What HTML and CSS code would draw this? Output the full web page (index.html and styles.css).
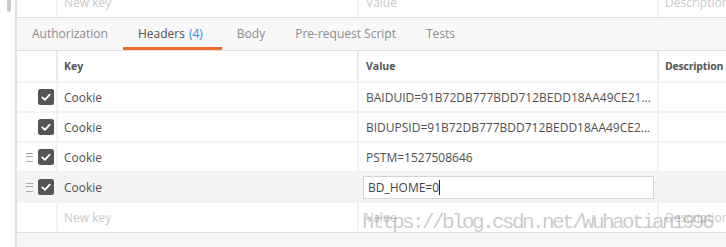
FILE: index.html
```html
<!DOCTYPE html>
<html lang="en">
<head>
    <meta charset="UTF-8">
    <title>Headers</title>
    <link rel="stylesheet" href="styles.css">
</head>
<body>
    <div class="page">
        <!-- left scroll strip -->
        <div class="gutter"><div class="thumb"></div></div>

        <div class="panel">
            <!-- previous table (params), cut at the top -->
            <div class="row prev">
                <div class="cell sel"></div>
                <div class="cell ph"><span class="clip">New key</span></div>
                <div class="cell ph"><span class="clip">Value</span></div>
                <div class="cell ph"><span class="clip">Description</span></div>
            </div>

            <div class="tabs">
                <div class="tab">Authorization</div>
                <div class="tab active">Headers <span class="count">(4)</span></div>
                <div class="tab">Body</div>
                <div class="tab">Pre-request Script</div>
                <div class="tab">Tests</div>
            </div>

            <div class="table">
                <div class="row head">
                    <div class="cell sel"></div>
                    <div class="cell">Key</div>
                    <div class="cell">Value</div>
                    <div class="cell">Description</div>
                </div>

                <div class="row">
                    <div class="cell sel">
                        <span class="handle hidden"></span>
                        <svg class="check" width="16" height="16" viewBox="0 0 16 16"><rect width="16" height="16" rx="2.5" fill="#555"/><path d="M4.3 8.4 L6.9 10.9 L11.7 5.6" fill="none" stroke="#fff" stroke-width="1.8" stroke-linecap="round" stroke-linejoin="round"/></svg>
                    </div>
                    <div class="cell">Cookie</div>
                    <div class="cell">BAIDUID=91B72DB777BDD712BEDD18AA49CE21...</div>
                    <div class="cell"></div>
                </div>

                <div class="row">
                    <div class="cell sel">
                        <span class="handle hidden"></span>
                        <svg class="check" width="16" height="16" viewBox="0 0 16 16"><rect width="16" height="16" rx="2.5" fill="#555"/><path d="M4.3 8.4 L6.9 10.9 L11.7 5.6" fill="none" stroke="#fff" stroke-width="1.8" stroke-linecap="round" stroke-linejoin="round"/></svg>
                    </div>
                    <div class="cell">Cookie</div>
                    <div class="cell">BIDUPSID=91B72DB777BDD712BEDD18AA49CE2...</div>
                    <div class="cell"></div>
                </div>

                <div class="row">
                    <div class="cell sel">
                        <span class="handle"></span>
                        <svg class="check" width="16" height="16" viewBox="0 0 16 16"><rect width="16" height="16" rx="2.5" fill="#555"/><path d="M4.3 8.4 L6.9 10.9 L11.7 5.6" fill="none" stroke="#fff" stroke-width="1.8" stroke-linecap="round" stroke-linejoin="round"/></svg>
                    </div>
                    <div class="cell">Cookie</div>
                    <div class="cell">PSTM=1527508646</div>
                    <div class="cell"></div>
                </div>

                <div class="row hover">
                    <div class="cell sel">
                        <span class="handle"></span>
                        <svg class="check" width="16" height="16" viewBox="0 0 16 16"><rect width="16" height="16" rx="2.5" fill="#555"/><path d="M4.3 8.4 L6.9 10.9 L11.7 5.6" fill="none" stroke="#fff" stroke-width="1.8" stroke-linecap="round" stroke-linejoin="round"/></svg>
                    </div>
                    <div class="cell">Cookie</div>
                    <div class="cell edit"><div class="input">BD_HOME=0<span class="caret"></span></div></div>
                    <div class="cell"></div>
                </div>

                <div class="row">
                    <div class="cell sel"></div>
                    <div class="cell ph">New key</div>
                    <div class="cell ph">Value</div>
                    <div class="cell ph">Description</div>
                </div>
            </div>

            <div class="footer"></div>
        </div>

        <div class="watermark">https://blog.csdn.net/Wuhaotian1996</div>
    </div>
</body>
</html>
```

FILE: styles.css
```css
* {
    margin: 0;
    padding: 0;
    box-sizing: border-box;
}

body {
    font-family: 'Open Sans', 'Noto Sans', sans-serif;
    font-size: 12px;
    color: #505050;
    background: #fff;
    overflow: hidden;
}

.page {
    position: relative;
    display: flex;
    height: 247px;
}

.gutter {
    width: 15px;
    flex-shrink: 0;
    padding-left: 7px;
}

.thumb {
    width: 4px;
    height: 12px;
    background: #c9c9c9;
    border-radius: 0 0 2px 2px;
}

.panel {
    flex: 1;
    display: flex;
    flex-direction: column;
    border-left: 2px solid #e1e1e1;
}

.row {
    display: grid;
    grid-template-columns: 39px 299px 298px 1fr;
    column-gap: 2px;
    background: #f3f3f3;
    height: 28px;
}

.cell {
    background: #fff;
    display: flex;
    align-items: center;
    padding-left: 7px;
    white-space: nowrap;
    overflow: hidden;
}

.cell:nth-child(2),
.cell:nth-child(4) {
    padding-left: 6px;
}

.ph {
    color: #cacaca;
}

.prev {
    height: 17px;
}

.prev .cell {
    align-items: flex-start;
}

.clip {
    margin-top: -6px;
}

.tabs {
    display: flex;
    height: 34px;
    background: #f8f8f8;
    border-top: 1px solid #dedede;
    border-bottom: 1px solid #dedede;
}

.tab {
    display: flex;
    align-items: center;
    padding: 0 15px;
    font-size: 12px;
    color: #8c8c8c;
    border-bottom: 3px solid transparent;
    padding-top: 2px;
}

.tab.active {
    color: #505050;
    border-bottom-color: #f06a2b;
    padding-right: 19px;
}

.count {
    color: #2f8ee8;
    margin-left: 4px;
}

.table {
    display: flex;
    flex-direction: column;
    gap: 2px;
    background: #f3f3f3;
}

.head {
    height: 30px;
    background: #ebebeb;
}

.head .cell {
    font-size: 10.5px;
    font-weight: 700;
    color: #555;
}

.head .cell:last-child {
    letter-spacing: -0.2px;
}

.sel {
    justify-content: flex-end;
    padding: 0 2px 0 0;
    gap: 5px;
}

.handle {
    width: 7px;
    height: 9px;
    border-top: 1.5px solid #a8a8a8;
    border-bottom: 1.5px solid #a8a8a8;
    position: relative;
}

.handle::after {
    content: "";
    position: absolute;
    left: 0;
    right: 0;
    top: 2.5px;
    border-top: 1.5px solid #a8a8a8;
}

.handle.hidden {
    visibility: hidden;
}

.check {
    display: block;
}

.hover {
    background: #f4f4f4;
}

.hover .cell {
    background: #f4f4f4;
}

.edit {
    padding: 0 3px 0 4px;
}

.input {
    flex: 1;
    height: 23px;
    background: #fff;
    border: 1px solid #d6d6d6;
    display: flex;
    align-items: center;
    padding-left: 4px;
    color: #444;
}

.caret {
    width: 1px;
    height: 15px;
    background: #222;
}

.footer {
    flex: 1;
    margin-top: 1px;
    border-top: 1px solid #dcdcdc;
    background: #f6f6f6;
}

.watermark {
    position: absolute;
    left: 362px;
    top: 211px;
    font-family: 'Liberation Mono', monospace;
    font-size: 21px;
    letter-spacing: -2.6px;
    color: rgba(120, 120, 120, 0.4);
    white-space: nowrap;
    pointer-events: none;
}
```
